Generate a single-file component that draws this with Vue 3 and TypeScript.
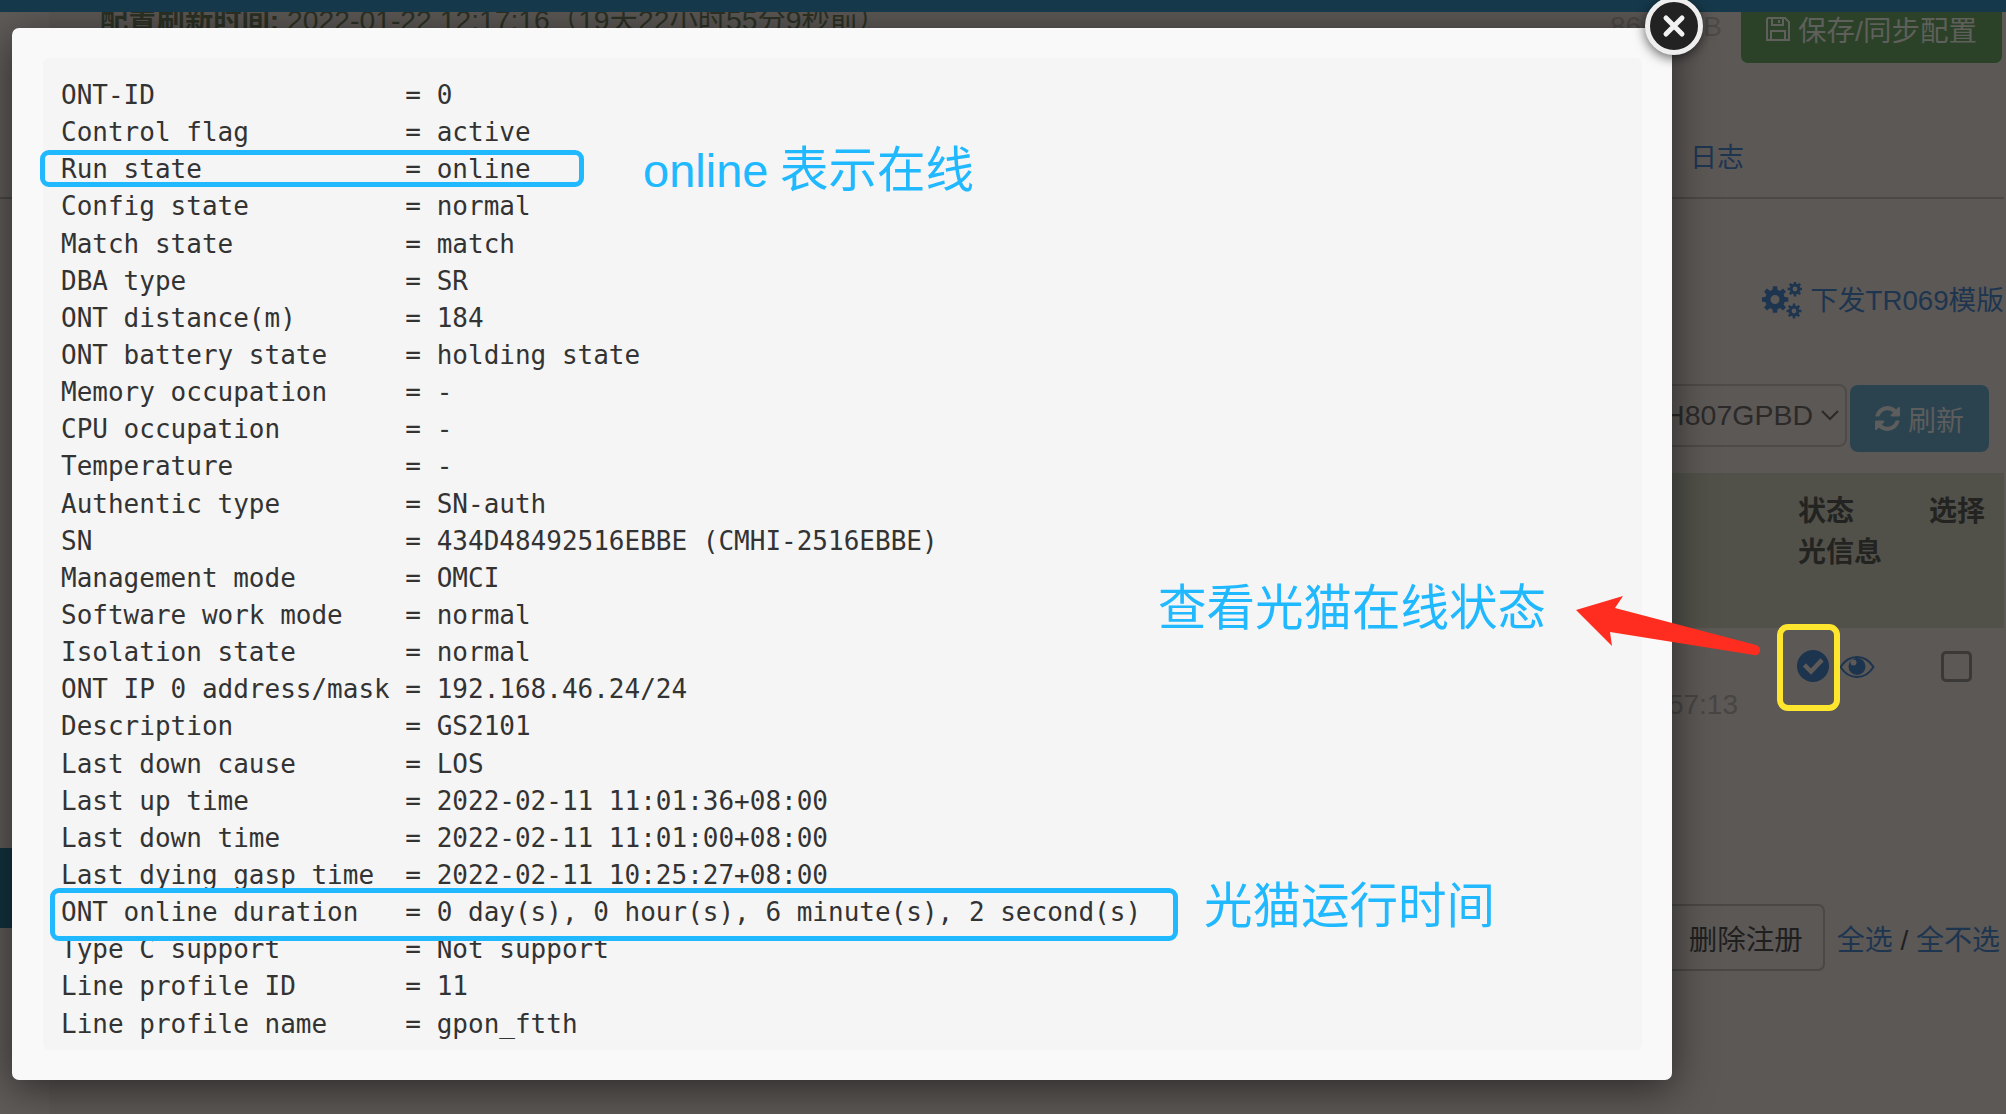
<script setup lang="ts">
const info = `ONT-ID                = 0
Control flag          = active
Run state             = online
Config state          = normal
Match state           = match
DBA type              = SR
ONT distance(m)       = 184
ONT battery state     = holding state
Memory occupation     = -
CPU occupation        = -
Temperature           = -
Authentic type        = SN-auth
SN                    = 434D48492516EBBE (CMHI-2516EBBE)
Management mode       = OMCI
Software work mode    = normal
Isolation state       = normal
ONT IP 0 address/mask = 192.168.46.24/24
Description           = GS2101
Last down cause       = LOS
Last up time          = 2022-02-11 11:01:36+08:00
Last down time        = 2022-02-11 11:01:00+08:00
Last dying gasp time  = 2022-02-11 10:25:27+08:00
ONT online duration   = 0 day(s), 0 hour(s), 6 minute(s), 2 second(s)
Type C support        = Not support
Line profile ID       = 11
Line profile name     = gpon_ftth`

function gear(cx: number, cy: number, ro: number, ri: number, hole: number, teeth: number): string {
  const pts: string[] = []
  const step = (Math.PI * 2) / teeth
  for (let i = 0; i < teeth; i++) {
    const a = i * step
    const w = step * 0.2
    const p = [
      [ri, a - step * 0.32],
      [ro, a - w],
      [ro, a + w],
      [ri, a + step * 0.32],
    ]
    for (const [r, t] of p) {
      pts.push(`${(cx + r * Math.cos(t)).toFixed(2)} ${(cy + r * Math.sin(t)).toFixed(2)}`)
    }
  }
  const ring = `M${cx - hole} ${cy}a${hole} ${hole} 0 1 0 ${hole * 2} 0a${hole} ${hole} 0 1 0 ${-hole * 2} 0z`
  return `M${pts.join('L')}Z${ring}`
}

const gears = [gear(13, 17.5, 13.5, 10, 4.5, 8), gear(33, 7, 7.5, 5.4, 2.4, 8), gear(32, 29, 7.5, 5.4, 2.4, 8)].join('')
</script>

<template>
  <div class="page">
    <div class="topbar"></div>

    <div class="info-row">
      <p class="refresh-time"><b>配置刷新时间:</b> 2022-01-22 12:17:16（19天22小时55分9秒前）</p>
      <span class="size">86.12MB</span>
      <button class="save">
        <svg class="save-icon" viewBox="0 0 24 24" fill="none" stroke="currentColor" stroke-width="2">
          <path d="M2 1h17l4 4v18H1V2z" />
          <path d="M6 1v7h11V1M13 3v3M5 23v-9h14v9" />
        </svg>
        保存/同步配置
      </button>
    </div>

    <nav class="tabs"><span>日志</span></nav>

    <div class="tool-row">
      <svg class="gears" viewBox="0 0 40 37" fill="currentColor" fill-rule="evenodd"><path :d="gears" /></svg>
      <span class="tool-label">下发TR069模版</span>
    </div>

    <div class="filter-row">
      <div class="select">
        <span>H807GPBD</span>
        <svg class="chevron" viewBox="0 0 18 11" fill="none" stroke="currentColor" stroke-width="2"><path d="M1 1l8 8 8-8" /></svg>
      </div>
      <button class="refresh">
        <svg class="refresh-icon" viewBox="128 128 1536 1536" fill="currentColor">
          <path d="M1639 1056q0 5-1 7-64 268-268 434.500t-478 166.500q-146 0-282.500-55t-243.500-157l-129 129q-19 19-45 19t-45-19-19-45v-448q0-26 19-45t45-19h448q26 0 45 19t19 45-19 45l-137 137q71 66 161 102t187 36q134 0 250-65t186-179q11-17 53-117 8-23 30-23h192q13 0 22.500 9.500t9.500 22.500zm25-800v448q0 26-19 45t-45 19h-448q-26 0-45-19t-19-45 19-45l138-138q-148-137-349-137-134 0-250 65t-186 179q-11 17-53 117-8 23-30 23h-199q-13 0-22.500-9.500t-9.500-22.500v-7q65-268 270-434.500t480-166.500q146 0 284 55.500t245 156.500l130-129q19-19 45-19t45 19 19 45z" />
        </svg>
        刷新
      </button>
    </div>

    <section class="table">
      <div class="thead">
        <div></div>
        <div>状态<br />光信息</div>
        <div>选择</div>
      </div>
      <div class="tbody">
        <div class="time">57:13</div>
        <div class="status">
          <svg class="check" viewBox="0 0 32 32">
            <circle cx="16" cy="16" r="16" fill="#1d344f" />
            <path d="M9 16.500l5 5 9.500-10" fill="none" stroke="#5e5a58" stroke-width="4.500" stroke-linecap="square" />
          </svg>
          <svg class="eye" viewBox="0 0 36 24">
            <path d="M1.500 12C6 5 11.500 2 18 2s12 3 16.500 10C30 19 24.500 22 18 22S6 19 1.500 12z" fill="none" stroke="#1d344f" stroke-width="2" />
            <circle cx="18" cy="11.500" r="8.500" fill="#1d344f" />
            <circle cx="14.500" cy="7.500" r="3" fill="#5e5a58" />
          </svg>
        </div>
        <div class="pick"><span class="checkbox"></span></div>
      </div>
    </section>

    <div class="footer">
      <button class="delete">删除注册</button>
      <span class="links"><a>全选</a> / <a>全不选</a></span>
    </div>

    <div class="modal">
      <pre class="output">{{ info }}</pre>
    </div>

    <button class="close" aria-label="关闭">
      <svg viewBox="0 0 24 24" fill="none" stroke="#f2f2f2" stroke-width="5" stroke-linecap="round"><path d="M4 4l16 16M20 4L4 20" /></svg>
    </button>

    <div class="mark mark-run"></div>
    <div class="mark mark-duration"></div>
    <div class="note note-online"><span class="latin">online</span> 表示在线</div>
    <div class="note note-duration">光猫运行时间</div>
    <div class="note note-status">查看光猫在线状态</div>
    <div class="mark-status"></div>
    <svg class="arrow" viewBox="1570 590 200 70">
      <path d="M1576 610L1623 596L1615 608L1756 645Q1761 647 1760 651Q1759 656 1754 655L1610 632L1612 646Z" fill="#ff2d1f" />
    </svg>
  </div>
</template>

<style scoped>
.page {
  position: relative;
  width: 2006px;
  height: 1114px;
  overflow: hidden;
  background-color: #5c5856;
  background-image: linear-gradient(#13333f, #13333f), linear-gradient(#5f5b59, #5f5b59);
  background-size: 49px 80px, 49px 100%;
  background-position: 0 848px, 0 0;
  background-repeat: no-repeat;
  color: #2b2a29;
  font-family: "Liberation Sans", "Noto Sans CJK SC", sans-serif;
  font-size: 28px;
}
button {
  font: inherit;
  border: none;
  padding: 0;
}
.topbar {
  position: relative;
  z-index: 1;
  height: 12px;
  background: #15384a;
}
.info-row {
  display: flex;
  align-items: flex-start;
  height: 51px;
  padding-right: 4px;
}
.refresh-time {
  margin: -12px 0 0 100px;
  font-size: 28.300px;
  line-height: 40px;
  color: #2c3224;
  white-space: nowrap;
}
.size {
  margin-left: auto;
  margin-right: 19px;
  line-height: 30px;
  color: #4c4947;
}
.save {
  display: flex;
  align-items: center;
  gap: 8px;
  width: 261px;
  height: 51px;
  padding: 0 0 18px 25px;
  background: #2b4228;
  color: #5f5f5b;
  font-size: 28.500px;
  border-radius: 0 0 7px 7px;
}
.save-icon {
  width: 24px;
  height: 24px;
}
.tabs {
  height: 136px;
  box-sizing: border-box;
  margin-right: 2px;
  padding: 77px 0 0 1690px;
  border-bottom: 2px solid #4b4846;
  color: #1e3550;
  font-size: 27px;
  line-height: 36px;
}
.tool-row {
  display: flex;
  justify-content: flex-end;
  align-items: center;
  gap: 9px;
  height: 37px;
  margin-top: 83px;
  padding-right: 2px;
  color: #1e3550;
  font-size: 27.700px;
}
.tool-label {
  margin-bottom: 5px;
}
.gears {
  width: 40px;
  height: 37px;
  margin-right: -1px;
}
.filter-row {
  display: flex;
  justify-content: flex-end;
  align-items: flex-start;
  gap: 3px;
  margin-top: 65px;
  padding-right: 17px;
}
.select {
  display: flex;
  align-items: center;
  justify-content: flex-end;
  gap: 8px;
  width: 347px;
  height: 63px;
  box-sizing: border-box;
  padding-right: 6px;
  border: 2px solid #4d4a48;
  border-radius: 8px;
  font-size: 28.500px;
}
.chevron {
  width: 18px;
  height: 11px;
}
.refresh {
  display: flex;
  align-items: center;
  gap: 8px;
  width: 139px;
  height: 67px;
  margin-top: 1px;
  padding-left: 25px;
  background: #2b434f;
  color: #5d5d5d;
  border-radius: 8px;
}
.refresh-icon {
  width: 25px;
  height: 25px;
}
.table {
  margin: 21px 2px 0 1500px;
}
.thead,
.tbody {
  display: grid;
  grid-template-columns: 298px 131px 75px;
}
.thead {
  height: 155px;
  padding-top: 18px;
  box-sizing: border-box;
  background: #51514a;
  font-size: 28px;
  font-weight: 700;
  line-height: 41px;
  color: #232321;
}
.tbody {
  height: 100px;
}
.time {
  padding: 59px 60px 0 0;
  text-align: right;
  color: #484543;
  font-size: 28px;
  line-height: 36px;
}
.status {
  display: flex;
  align-items: flex-start;
  gap: 10px;
  padding-top: 22px;
}
.check {
  width: 32px;
  height: 32px;
  margin-left: -1px;
}
.eye {
  width: 36px;
  height: 24px;
  margin-top: 5px;
}
.pick {
  padding: 23px 0 0 12px;
}
.checkbox {
  display: block;
  width: 31px;
  height: 31px;
  box-sizing: border-box;
  border: 3px solid #3b3937;
  border-radius: 5px;
}
.footer {
  display: flex;
  justify-content: flex-end;
  align-items: center;
  gap: 12px;
  margin-top: 176px;
  padding-right: 6px;
}
.delete {
  width: 160px;
  height: 67px;
  padding-left: 22px;
  text-align: left;
  background: transparent;
  border: 2px solid #4a4745;
  border-radius: 7px;
  color: #1f1f1f;
  font-size: 28.500px;
  box-sizing: border-box;
}
.links {
  color: #1f1f1f;
}
.links a {
  color: #1e3550;
}
.modal {
  position: absolute;
  left: 12px;
  top: 28px;
  width: 1660px;
  height: 1052px;
  box-sizing: border-box;
  padding: 30px 30px 30px 31px;
  background: #f9f9f9;
  border-radius: 7px;
  box-shadow: 0 8px 40px rgba(0, 0, 0, 0.55);
}
.output {
  height: 100%;
  margin: 0;
  box-sizing: border-box;
  padding: 19px 18px 0;
  overflow: hidden;
  background: #f5f5f5;
  border-radius: 6px;
  color: #333;
  font-family: "DejaVu Sans Mono", monospace;
  font-size: 26px;
  line-height: 1.42857;
}
.close {
  position: absolute;
  left: 1645px;
  top: -3px;
  width: 58px;
  height: 58px;
  box-sizing: border-box;
  padding: 12px;
  background: #222;
  border: 5px solid #eee;
  border-radius: 50%;
  box-shadow: 0 3px 12px rgba(0, 0, 0, 0.6);
  z-index: 2;
}
.close svg {
  display: block;
  width: 100%;
  height: 100%;
}
.mark {
  position: absolute;
  box-sizing: border-box;
  border: 5px solid #20b8ff;
  border-radius: 9px;
}
.mark-run {
  left: 40px;
  top: 150px;
  width: 544px;
  height: 37px;
}
.mark-duration {
  left: 50px;
  top: 888px;
  width: 1128px;
  height: 53px;
}
.note {
  position: absolute;
  color: #20b8ff;
  font-size: 48.500px;
  font-weight: 400;
  line-height: 60px;
  white-space: nowrap;
}
.latin {
  font-size: 47px;
  margin-right: -2px;
}
.note-online {
  left: 643px;
  top: 140px;
}
.note-duration {
  left: 1204px;
  top: 876px;
}
.note-status {
  left: 1158px;
  top: 578px;
}
.mark-status {
  position: absolute;
  left: 1777px;
  top: 624px;
  width: 63px;
  height: 87px;
  box-sizing: border-box;
  border: 6px solid #ffe62e;
  border-radius: 11px;
}
.arrow {
  position: absolute;
  left: 1570px;
  top: 590px;
  width: 200px;
  height: 70px;
}
</style>
